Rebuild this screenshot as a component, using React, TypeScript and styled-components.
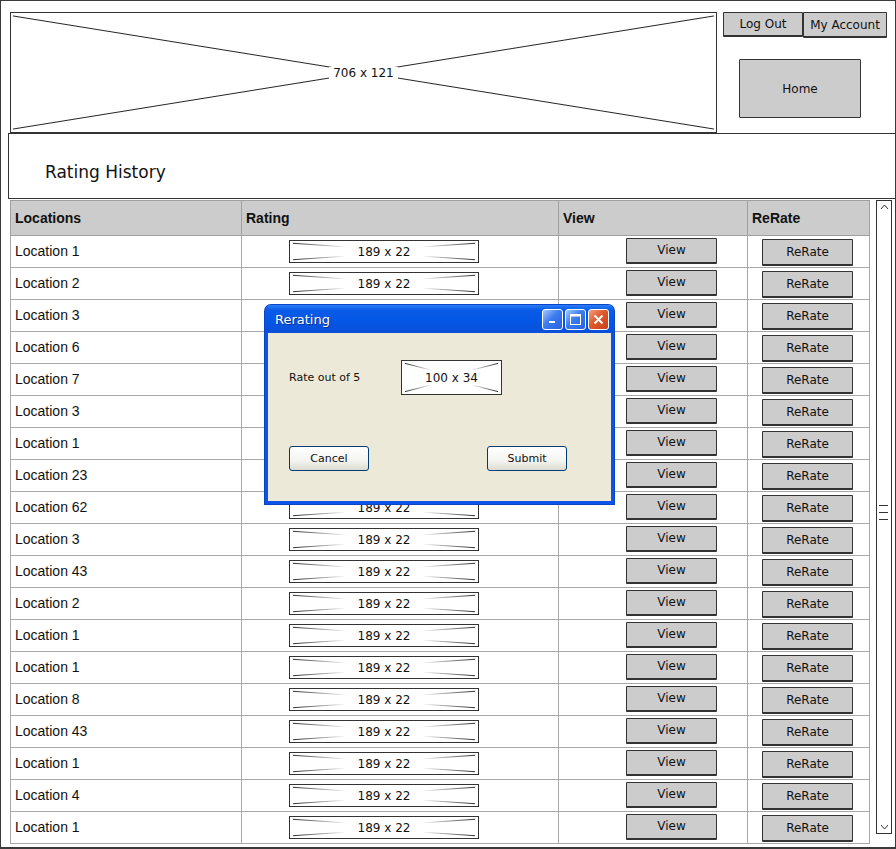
import React from "react";
import styled, { createGlobalStyle } from "styled-components";

const Global = createGlobalStyle`
  html, body { margin: 0; padding: 0; background: #fff; }
  body { font-family: "Liberation Sans", Arial, sans-serif; }
  * { box-sizing: border-box; }
`;

const sketch = `"Comic Sans MS", "DejaVu Sans", sans-serif`;

const Frame = styled.div`
  position: relative;
  width: 896px;
  height: 849px;
  border: 1px solid #3a3a3a;
  border-bottom-width: 2px;
  overflow: hidden;
  display: flex;
  flex-direction: column;
`;

const Header = styled.div`
  display: flex;
  height: 132px;
  flex: none;
`;

const PlaceholderBox = styled.div<{ $w: number; $h: number }>`
  position: relative;
  width: ${(p) => p.$w}px;
  height: ${(p) => p.$h}px;
  border: 1px solid #333;
  background: #fff;
  flex: none;
  display: flex;
  align-items: center;
  justify-content: center;
`;

const BigImage = styled(PlaceholderBox)`
  margin: 11px 0 0 9px;
`;

const PlaceholderSvg = styled.svg`
  position: absolute;
  inset: 0;
  width: 100%;
  height: 100%;
`;

const PlaceholderLabel = styled.span<{ $size: number }>`
  position: relative;
  background: #fff;
  padding: 0 4px;
  font-family: "DejaVu Sans", sans-serif;
  font-size: ${(p) => p.$size}px;
  color: #111;
  line-height: 1;
`;

const SideNav = styled.div`
  display: flex;
  flex-direction: column;
  margin: 11px 0 0 6px;
`;

const AccountRow = styled.div`
  display: flex;
`;

const SketchButton = styled.button<{ $w: number; $h: number; $size?: number }>`
  width: ${(p) => p.$w}px;
  height: ${(p) => p.$h}px;
  background: #cccccc;
  border: 1px solid #333;
  border-bottom-width: 2px;
  border-radius: 1px;
  font-family: ${sketch};
  font-size: ${(p) => p.$size ?? 12}px;
  color: #111;
  padding: 0;
  flex: none;
  cursor: pointer;
`;

const HomeButton = styled(SketchButton)`
  margin: 21px 0 0 16px;
  border-bottom-width: 1px;
`;

const TitleBox = styled.div`
  flex: none;
  margin-left: 7px;
  width: 888px;
  height: 66px;
  border: 1px solid #333;
  display: flex;
  align-items: center;
  padding: 12px 0 0 36px;
  font-family: ${sketch};
  font-size: 17px;
  color: #111;
`;

const Body = styled.div`
  display: flex;
  align-items: flex-start;
  padding-top: 1px;
`;

const Table = styled.table`
  margin-left: 9px;
  width: 860px;
  border-collapse: collapse;
  table-layout: fixed;
  flex: none;
  font-family: "Liberation Sans", Arial, sans-serif;
  font-size: 14px;
  color: #111;
`;

const Th = styled.th<{ $w: number }>`
  width: ${(p) => p.$w}px;
  height: 35px;
  background: #cccccc;
  border: 1px solid #a0a0a0;
  text-align: left;
  padding: 0 0 0 4px;
  font-weight: bold;
`;

const Td = styled.td<{ $pl?: number }>`
  height: 32px;
  border: 1px solid #a8a8a8;
  padding: 0 0 0 ${(p) => p.$pl ?? 4}px;
  vertical-align: middle;
`;

const LocationText = styled.span`
  position: relative;
  top: -1px;
`;

const CellInner = styled.div<{ $top: number }>`
  display: flex;
  margin-top: ${(p) => p.$top}px;
`;

const Scrollbar = styled.div`
  position: relative;
  margin-left: 6px;
  width: 16px;
  height: 634px;
  border: 1px solid #333;
  flex: none;
  display: flex;
  flex-direction: column;
  justify-content: space-between;
  align-items: center;
  padding: 3px 0;
`;

const Grip = styled.div`
  position: absolute;
  left: 2px;
  top: 304px;
  width: 9px;
  display: flex;
  flex-direction: column;
  gap: 6px;
  & > span {
    display: block;
    height: 1px;
    background: #333;
  }
`;

/* Dialog */
const Dialog = styled.div`
  position: absolute;
  left: 264px;
  top: 304px;
  width: 349px;
  height: 199px;
  border: 3px solid #0a55e8;
  border-top: none;
  border-radius: 6px 6px 0 0;
  background: #ece9d8;
  display: flex;
  flex-direction: column;
  box-shadow: 0 0 0 1px #0a45c8;
`;

const TitleBar = styled.div`
  height: 28px;
  margin: 0 -3px;
  border-radius: 6px 6px 0 0;
  background: linear-gradient(#2a7cf6 0%, #0a5be8 18%, #0456e4 60%, #0a4fd8 100%);
  display: flex;
  align-items: center;
  padding: 0 5px 0 10px;
`;

const DialogTitle = styled.span`
  flex: 1;
  color: #fff;
  font-family: "DejaVu Sans", sans-serif;
  font-size: 13px;
  text-shadow: 1px 1px 0 #0a2f8a;
`;

const WinBtn = styled.div<{ $close?: boolean }>`
  width: 21px;
  height: 21px;
  margin-left: 2px;
  border: 1px solid #fff;
  border-radius: 3px;
  background: ${(p) =>
    p.$close
      ? "linear-gradient(135deg, #f0a080 0%, #e0582c 45%, #c8401c 100%)"
      : "linear-gradient(135deg, #a8c8ff 0%, #3c7cf0 45%, #2a60e0 100%)"};
  display: flex;
  align-items: center;
  justify-content: center;
`;

const DialogBody = styled.div`
  flex: 1;
  display: flex;
  flex-direction: column;
  padding: 27px 0 0 21px;
  font-family: "DejaVu Sans", sans-serif;
  font-size: 11px;
  color: #111;
`;

const RateRow = styled.div`
  display: flex;
  align-items: center;
`;

const RateLabel = styled.span`
  width: 112px;
`;

const DialogButtons = styled.div`
  display: flex;
  gap: 118px;
  margin-top: 51px;
`;

const XpButton = styled.button`
  width: 80px;
  height: 25px;
  border: 1px solid #003c74;
  border-radius: 3px;
  background: linear-gradient(#ffffff 0%, #f4f4f0 60%, #dcdcd4 100%);
  font-family: "DejaVu Sans", sans-serif;
  font-size: 11px;
  color: #111;
  padding: 0;
`;

const Placeholder: React.FC<{ w: number; h: number; label: string; size: number; fade?: boolean }> = ({
  w,
  h,
  label,
  size,
  fade,
}) => {
  const id = `g${w}x${h}`;
  return (
    <PlaceholderBox $w={w} $h={h}>
      <PlaceholderSvg viewBox={`0 0 ${w} ${h}`} preserveAspectRatio="none">
        {fade && (
          <defs>
            <linearGradient id={id + "l"} x1="0" x2="1" y1="0" y2="0">
              <stop offset="0" stopColor="#222" />
              <stop offset="1" stopColor="#222" stopOpacity="0" />
            </linearGradient>
            <linearGradient id={id + "r"} x1="1" x2="0" y1="0" y2="0">
              <stop offset="0" stopColor="#222" />
              <stop offset="1" stopColor="#222" stopOpacity="0" />
            </linearGradient>
          </defs>
        )}
        {fade ? (
          <>
            <line x1="3" y1="2.5" x2={w * 0.3} y2={h * 0.28} stroke={`url(#${id}l)`} strokeWidth="1" />
            <line x1="3" y1={h - 2.5} x2={w * 0.3} y2={h * 0.72} stroke={`url(#${id}l)`} strokeWidth="1" />
            <line x1={w - 3} y1="2.5" x2={w * 0.7} y2={h * 0.28} stroke={`url(#${id}r)`} strokeWidth="1" />
            <line x1={w - 3} y1={h - 2.5} x2={w * 0.7} y2={h * 0.72} stroke={`url(#${id}r)`} strokeWidth="1" />
          </>
        ) : (
          <>
            <line x1="2" y1="2" x2={w - 2} y2={h - 2} stroke="#222" strokeWidth="1" />
            <line x1="2" y1={h - 2} x2={w - 2} y2="2" stroke="#222" strokeWidth="1" />
          </>
        )}
      </PlaceholderSvg>
      <PlaceholderLabel $size={size}>{label}</PlaceholderLabel>
    </PlaceholderBox>
  );
};

const locations = ["1", "2", "3", "6", "7", "3", "1", "23", "62", "3", "43", "2", "1", "1", "8", "43", "1", "4", "1"];

const Chevron: React.FC<{ up?: boolean }> = ({ up }) => (
  <svg width="9" height="6" viewBox="0 0 9 6">
    <polyline
      points={up ? "1,5 4.5,1 8,5" : "1,1 4.5,5 8,1"}
      fill="none"
      stroke="#333"
      strokeWidth="1"
    />
  </svg>
);

export default function App() {
  return (
    <>
      <Global />
      <Frame>
        <Header>
          <BigImage $w={707} $h={121}>
            <PlaceholderSvg viewBox="0 0 707 121" preserveAspectRatio="none">
              <line x1="2" y1="3" x2="705" y2="118" stroke="#222" strokeWidth="1" />
              <line x1="2" y1="118" x2="705" y2="3" stroke="#222" strokeWidth="1" />
            </PlaceholderSvg>
            <PlaceholderLabel $size={12}>706 x 121</PlaceholderLabel>
          </BigImage>
          <SideNav>
            <AccountRow>
              <SketchButton $w={80} $h={25}>Log Out</SketchButton>
              <SketchButton $w={84} $h={26}>My Account</SketchButton>
            </AccountRow>
            <HomeButton $w={122} $h={59}>Home</HomeButton>
          </SideNav>
        </Header>
        <TitleBox>Rating History</TitleBox>
        <Body>
          <Table>
            <thead>
              <tr>
                <Th $w={231}>Locations</Th>
                <Th $w={317}>Rating</Th>
                <Th $w={189}>View</Th>
                <Th $w={122}>ReRate</Th>
              </tr>
            </thead>
            <tbody>
              {locations.map((n, i) => (
                <tr key={i}>
                  <Td>
                    <LocationText>Location {n}</LocationText>
                  </Td>
                  <Td $pl={47}>
                    <Placeholder w={190} h={23} label="189 x 22" size={12} fade />
                  </Td>
                  <Td $pl={67}>
                    <CellInner $top={-2}>
                      <SketchButton $w={91} $h={26}>View</SketchButton>
                    </CellInner>
                  </Td>
                  <Td $pl={14}>
                    <CellInner $top={2}>
                      <SketchButton $w={91} $h={27}>ReRate</SketchButton>
                    </CellInner>
                  </Td>
                </tr>
              ))}
            </tbody>
          </Table>
          <Scrollbar>
            <Chevron up />
            <Grip>
              <span />
              <span />
              <span />
            </Grip>
            <Chevron />
          </Scrollbar>
        </Body>
        <Dialog>
          <TitleBar>
            <DialogTitle>Rerating</DialogTitle>
            <WinBtn>
              <svg width="11" height="11" viewBox="0 0 11 11">
                <rect x="2" y="7" width="6" height="2" fill="#fff" />
              </svg>
            </WinBtn>
            <WinBtn>
              <svg width="13" height="13" viewBox="0 0 13 13">
                <rect x="1.5" y="1.5" width="10" height="10" fill="none" stroke="#fff" strokeWidth="1" />
                <rect x="1.5" y="1.5" width="10" height="2" fill="#fff" />
              </svg>
            </WinBtn>
            <WinBtn $close>
              <svg width="11" height="11" viewBox="0 0 11 11">
                <path d="M1.5 1.5 L9.5 9.5 M9.5 1.5 L1.5 9.5" stroke="#fff" strokeWidth="2" />
              </svg>
            </WinBtn>
          </TitleBar>
          <DialogBody>
            <RateRow>
              <RateLabel>Rate out of 5</RateLabel>
              <Placeholder w={101} h={35} label="100 x 34" size={12} fade />
            </RateRow>
            <DialogButtons>
              <XpButton>Cancel</XpButton>
              <XpButton>Submit</XpButton>
            </DialogButtons>
          </DialogBody>
        </Dialog>
      </Frame>
    </>
  );
}
